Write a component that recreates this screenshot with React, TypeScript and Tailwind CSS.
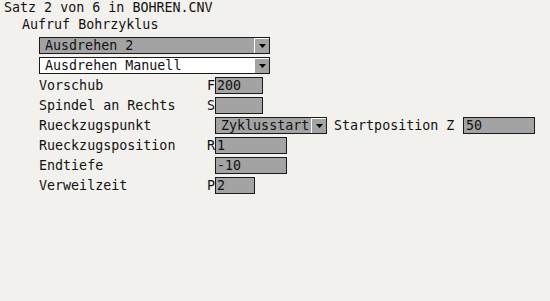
import React from "react";

function Arrow() {
  return (
    <div className="w-[15px] h-[15px] shrink-0 border-t border-l border-white bg-[#a3a3a3] flex items-center justify-center">
      <svg width="7" height="4" viewBox="0 0 7 4">
        <polygon points="0,0 7,0 3.5,4" fill="#000" />
      </svg>
    </div>
  );
}

function Combo({ value, className }: { value: string; className: string }) {
  return (
    <div className={`h-[17px] border border-[#1a1a1a] flex items-center ${className}`}>
      <span className="flex-1 pl-[5px] leading-none whitespace-pre">{value}</span>
      <Arrow />
    </div>
  );
}

function Field({ value, className }: { value: string; className: string }) {
  return (
    <div className={`h-[17px] border border-[#1a1a1a] bg-[#a3a3a3] flex items-center pl-[1px] leading-none ${className}`}>
      {value}
    </div>
  );
}

function Row({ label, letter, children }: { label: string; letter?: string; children: React.ReactNode }) {
  return (
    <div className="flex items-center h-[17px]">
      <span className="w-[168px] whitespace-pre">{label}</span>
      <span className="w-[8px]">{letter}</span>
      {children}
    </div>
  );
}

export default function App() {
  return (
    <div
      className="w-[550px] h-[301px] bg-[#f2f1ee] text-[#111] text-[13.33px] leading-[16px] overflow-hidden"
      style={{ fontFamily: '"DejaVu Sans Mono", monospace' }}
    >
      <div className="pl-[4px]">Satz 2 von 6 in BOHREN.CNV</div>
      <div className="pl-[22px] leading-[17px]">Aufruf Bohrzyklus</div>

      <div className="pl-[39px] pt-[4px] flex flex-col gap-[3px]">
        <Combo value="Ausdrehen 2" className="w-[231px] bg-[#a3a3a3]" />
        <Combo value="Ausdrehen Manuell" className="w-[231px] bg-white" />

        <Row label="Vorschub" letter="F">
          <Field value="200" className="w-[48px]" />
        </Row>
        <Row label="Spindel an Rechts" letter="S">
          <Field value="" className="w-[48px]" />
        </Row>
        <Row label="Rueckzugspunkt">
          <Combo value="Zyklusstart" className="w-[112px] bg-[#a3a3a3]" />
          <span className="ml-[7px] w-[129px]">Startposition Z</span>
          <Field value="50" className="w-[72px] pl-[2px]" />
        </Row>
        <Row label="Rueckzugsposition" letter="R">
          <Field value="1" className="w-[72px]" />
        </Row>
        <Row label="Endtiefe">
          <Field value="-10" className="w-[72px]" />
        </Row>
        <Row label="Verweilzeit" letter="P">
          <Field value="2" className="w-[40px]" />
        </Row>
      </div>
    </div>
  );
}
